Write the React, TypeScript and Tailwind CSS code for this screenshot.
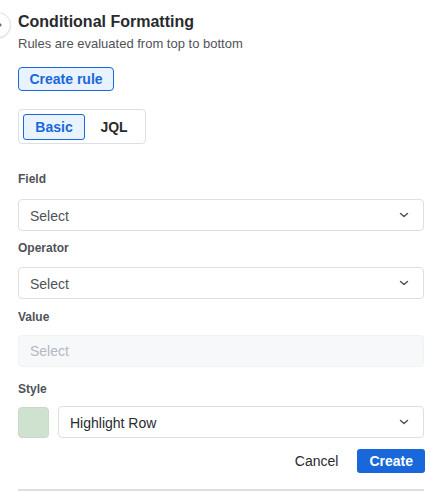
import React from 'react';

const ChevronDown: React.FC = () => (
  <svg width="10" height="6" viewBox="0 0 10 6" fill="none" className="shrink-0">
    <path d="M1.5 1.5 L5 4.5 L8.5 1.5" stroke="#505258" strokeWidth="1.5" strokeLinecap="round" strokeLinejoin="round" />
  </svg>
);

interface SelectBoxProps {
  value: string;
  disabled?: boolean;
  dark?: boolean;
  className?: string;
}

const SelectBox: React.FC<SelectBoxProps> = ({ value, disabled, dark, className = '' }) => {
  if (disabled) {
    return (
      <div className={`h-[32px] flex items-center px-[11px] pt-[1px] rounded-[4px] bg-[#f7f8f9] border border-[#f1f2f4] text-[14px] text-[#b3b9c4] ${className}`}>
        {value}
      </div>
    );
  }
  return (
    <div className={`h-[32px] flex items-center justify-between pl-[11px] pr-[14px] rounded-[4px] bg-white border border-[#dcdfe4] text-[14px] ${dark ? 'text-[#292a2e]' : 'text-[#505258]'} ${className}`}>
      <span className="pt-[2px]">{value}</span>
      <ChevronDown />
    </div>
  );
};

const Label: React.FC<{ text: string; className?: string }> = ({ text, className = '' }) => (
  <div className={`text-[12px] leading-[16px] font-bold text-[#505258] ${className}`}>{text}</div>
);

const App: React.FC = () => {
  return (
    <div className="relative min-h-[491px] bg-white pl-[18px] pr-[7px] pt-[12px] font-['Liberation_Sans',Arial,sans-serif] overflow-hidden">
      {/* collapse toggle peeking from the left edge */}
      <div className="absolute left-[-15px] top-[12px] w-[26px] h-[26px] rounded-full bg-white border border-[#dcdfe4] shadow-[0_1px_1px_rgba(9,30,66,0.08)]">
        <svg width="8" height="8" viewBox="0 0 8 8" fill="none" className="absolute left-[9px] top-[8px]">
          <path d="M3 1 L6 4 L3 7" stroke="#6b6e76" strokeWidth="1.4" strokeLinecap="round" strokeLinejoin="round" />
        </svg>
      </div>

      <h1 className="text-[16px] leading-[20px] font-bold text-[#292a2e]">Conditional Formatting</h1>
      <p className="mt-[4px] text-[13px] leading-[16px] text-[#505258]">Rules are evaluated from top to bottom</p>

      <button className="mt-[15px] w-[96px] h-[24px] rounded-[4px] border border-[#1868db] bg-[#e9f2ff] text-[14px] font-semibold text-[#1868db] flex items-center justify-center pt-[1px]">
        Create rule
      </button>

      <div className="mt-[18px] w-[128px] h-[35px] rounded-[4px] border border-[#dcdfe4] p-[4px] flex items-center gap-[2px]">
        <button className="h-[26px] w-[62px] shrink-0 rounded-[3px] border border-[#1868db] bg-[#e9f2ff] text-[14px] font-bold text-[#1868db] flex items-center justify-center pt-[1px]">
          Basic
        </button>
        <button className="h-[26px] w-[54px] shrink-0 rounded-[3px] text-[14px] font-bold text-[#292a2e] flex items-center justify-center pt-[1px]">
          JQL
        </button>
      </div>

      <Label text="Field" className="mt-[27px]" />
      <SelectBox value="Select" className="mt-[12px]" />

      <Label text="Operator" className="mt-[9px]" />
      <SelectBox value="Select" className="mt-[11px]" />

      <Label text="Value" className="mt-[10px]" />
      <SelectBox value="Select" disabled className="mt-[10px]" />

      <Label text="Style" className="mt-[14px]" />
      <div className="mt-[9px] flex items-center gap-[9px]">
        <div className="w-[31px] h-[31px] rounded-[4px] bg-[#cfe1cf] border border-[#c8d9c8] shrink-0" />
        <SelectBox value="Highlight Row" dark className="flex-1" />
      </div>

      <div className="mt-[11px] mr-[-1px] flex justify-end gap-[7px]">
        <button className="h-[24px] px-[12px] rounded-[3px] text-[14px] text-[#292a2e] pt-[1px]">Cancel</button>
        <button className="h-[24px] px-[12px] rounded-[3px] bg-[#1868db] text-[14px] font-semibold text-white pt-[1px]">Create</button>
      </div>

      <div className="mt-[16px] h-[2px] bg-[#dddee1]" />
    </div>
  );
};

export default App;
